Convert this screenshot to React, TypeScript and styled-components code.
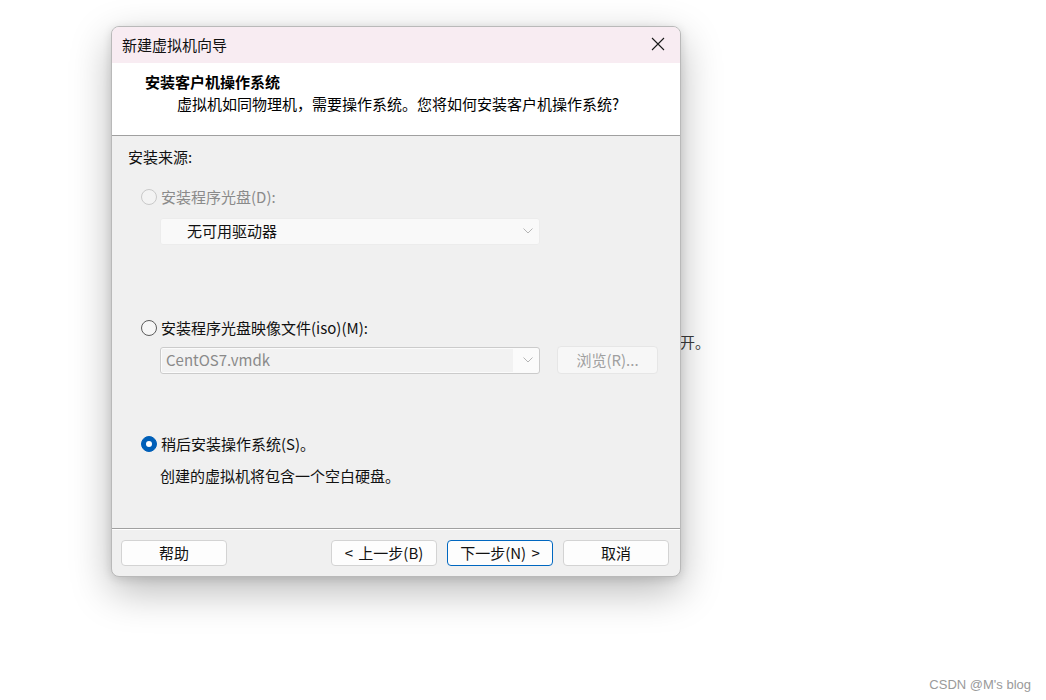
import React from "react";
import styled, { createGlobalStyle } from "styled-components";

const GlobalStyle = createGlobalStyle`
  html, body { margin: 0; padding: 0; background: #ffffff; }
  body {
    font-family: "Noto Sans CJK SC", "Noto Sans", sans-serif;
    -webkit-font-smoothing: antialiased;
  }
  * { box-sizing: border-box; }
`;

const Page = styled.div`
  position: relative;
  width: 1046px;
  height: 700px;
  overflow: hidden;
  background: #ffffff;
`;

const BackdropText = styled.div`
  padding: 331px 0 0 680px;
  font-size: 15px;
  line-height: 22px;
  color: #3c3c3c;
  white-space: nowrap;
`;

const Watermark = styled.div`
  position: absolute;
  right: 15px;
  bottom: 8px;
  font-family: "Liberation Sans", Arial, sans-serif;
  font-size: 13px;
  color: #9a9a9a;
`;

const Window = styled.div`
  position: absolute;
  left: 111px;
  top: 26px;
  width: 570px;
  height: 551px;
  border: 1px solid #b9b9b9;
  border-radius: 8px;
  overflow: hidden;
  background: #f0f0f0;
  box-shadow: 0 14px 40px rgba(0, 0, 0, 0.28), 0 2px 10px rgba(0, 0, 0, 0.12);
  display: flex;
  flex-direction: column;
`;

const TitleBar = styled.div`
  height: 36px;
  background: #f8ecf2;
  display: flex;
  align-items: center;
  justify-content: space-between;
  padding: 0 14px 2px 10px;
  font-size: 15px;
  color: #111;
`;

const CloseButton = styled.div`
  width: 16px;
  height: 16px;
  display: flex;
  align-items: center;
  justify-content: center;
`;

const Header = styled.div`
  height: 73px;
  background: #ffffff;
  border-bottom: 1px solid #a0a0a0;
  padding: 8px 0 0 33px;
  display: flex;
  flex-direction: column;
`;

const HeaderTitle = styled.div`
  font-size: 15px;
  font-weight: 700;
  line-height: 22px;
  color: #000;
`;

const HeaderSub = styled.div`
  font-size: 15px;
  line-height: 22px;
  color: #000;
  padding-left: 32px;
`;

const Body = styled.div`
  flex: 1;
  padding: 10px 0 0 16px;
  display: flex;
  flex-direction: column;
  border-bottom: 1px solid #a0a0a0;
`;

const SectionLabel = styled.div`
  font-size: 15px;
  line-height: 22px;
  color: #111;
`;

const RadioRow = styled.label<{ $mt: number; $disabled?: boolean }>`
  margin-top: ${(p) => p.$mt}px;
  margin-left: 13px;
  display: flex;
  align-items: center;
  gap: 4px;
  font-size: 15px;
  line-height: 22px;
  color: ${(p) => (p.$disabled ? "#8a8a8a" : "#111")};
`;

const RadioDot = styled.span<{ $state: "disabled" | "off" | "on" }>`
  width: 16px;
  height: 16px;
  border-radius: 50%;
  flex: none;
  position: relative;
  border: ${(p) =>
    p.$state === "on"
      ? "1px solid #005fb8"
      : p.$state === "disabled"
      ? "1px solid #c9c9c9"
      : "1px solid #5c5c5c"};
  background: ${(p) =>
    p.$state === "on" ? "#005fb8" : p.$state === "disabled" ? "#f3f3f3" : "#f6f6f6"};
  &::after {
    content: "";
    display: ${(p) => (p.$state === "on" ? "block" : "none")};
    position: absolute;
    left: 4px;
    top: 4px;
    width: 6px;
    height: 6px;
    border-radius: 50%;
    background: #ffffff;
  }
`;

const Indented = styled.div<{ $mt: number }>`
  margin-top: ${(p) => p.$mt}px;
  margin-left: 32px;
  display: flex;
  align-items: center;
  gap: 17px;
`;

const Select = styled.div<{ $variant: "plain" | "boxed" }>`
  width: 380px;
  height: 27px;
  display: flex;
  align-items: center;
  justify-content: space-between;
  font-size: 15px;
  border-radius: 3px;
  background: ${(p) => (p.$variant === "plain" ? "#f9f9f9" : "#fbfbfb")};
  border: 1px solid ${(p) => (p.$variant === "plain" ? "#ececec" : "#cbcbcb")};
  color: ${(p) => (p.$variant === "plain" ? "#111" : "#8a8a8a")};
  padding: ${(p) => (p.$variant === "plain" ? "0 6px 2px 26px" : "1px 6px 1px 1px")};
`;

const SelectField = styled.div`
  flex: 1;
  height: 100%;
  background: #f2f2f2;
  padding: 0 0 2px 4px;
  display: flex;
  align-items: center;
  margin-right: 10px;
`;

const BrowseButton = styled.div`
  width: 101px;
  height: 28px;
  border: 1px solid #e6e6e6;
  border-radius: 4px;
  background: #f7f7f7;
  color: #a0a0a0;
  font-size: 15px;
  padding-bottom: 2px;
  display: flex;
  align-items: center;
  justify-content: center;
`;

const Description = styled.div`
  margin-top: 10px;
  margin-left: 32px;
  font-size: 15px;
  line-height: 22px;
  color: #111;
`;

const Footer = styled.div`
  height: 47px;
  display: flex;
  align-items: flex-start;
  padding: 10px 10px 0 9px;
  border-top: 1px solid #ffffff;
`;

const Button = styled.div<{ $primary?: boolean; $ml?: number }>`
  width: 106px;
  height: 26px;
  margin-left: ${(p) => p.$ml ?? 0}px;
  border-radius: 4px;
  border: 1px solid ${(p) => (p.$primary ? "#0067c0" : "#d3d3d3")};
  background: #fdfdfd;
  font-size: 15px;
  color: #111;
  padding-bottom: 2px;
  display: flex;
  align-items: center;
  justify-content: center;
  word-spacing: 2px;
`;

const Chevron = ({ color }: { color: string }) => (
  <svg width="10" height="6" viewBox="0 0 10 6">
    <path d="M0.5 0.5 L5 5 L9.5 0.5" fill="none" stroke={color} strokeWidth="1" />
  </svg>
);

export default function App() {
  return (
    <Page>
      <GlobalStyle />
      <BackdropText>开。</BackdropText>
      <Window>
        <TitleBar>
          <span>新建虚拟机向导</span>
          <CloseButton>
            <svg width="14" height="14" viewBox="0 0 14 14">
              <path d="M1 1 L13 13 M13 1 L1 13" stroke="#1a1a1a" strokeWidth="1.1" />
            </svg>
          </CloseButton>
        </TitleBar>
        <Header>
          <HeaderTitle>安装客户机操作系统</HeaderTitle>
          <HeaderSub>虚拟机如同物理机，需要操作系统。您将如何安装客户机操作系统?</HeaderSub>
        </Header>
        <Body>
          <SectionLabel>安装来源:</SectionLabel>
          <RadioRow $mt={18} $disabled>
            <RadioDot $state="disabled" />
            安装程序光盘(D):
          </RadioRow>
          <Indented $mt={10}>
            <Select $variant="plain">
              <span>无可用驱动器</span>
              <Chevron color="#b5b5b5" />
            </Select>
          </Indented>
          <RadioRow $mt={72}>
            <RadioDot $state="off" />
            安装程序光盘映像文件(iso)(M):
          </RadioRow>
          <Indented $mt={7}>
            <Select $variant="boxed">
              <SelectField>CentOS7.vmdk</SelectField>
              <Chevron color="#b5b5b5" />
            </Select>
            <BrowseButton>浏览(R)...</BrowseButton>
          </Indented>
          <RadioRow $mt={59}>
            <RadioDot $state="on" />
            稍后安装操作系统(S)。
          </RadioRow>
          <Description>创建的虚拟机将包含一个空白硬盘。</Description>
        </Body>
        <Footer>
          <Button>帮助</Button>
          <Button $ml={104}>&lt; 上一步(B)</Button>
          <Button $ml={10} $primary>
            下一步(N) &gt;
          </Button>
          <Button $ml={10}>取消</Button>
        </Footer>
      </Window>
      <Watermark>CSDN @M's blog</Watermark>
    </Page>
  );
}
